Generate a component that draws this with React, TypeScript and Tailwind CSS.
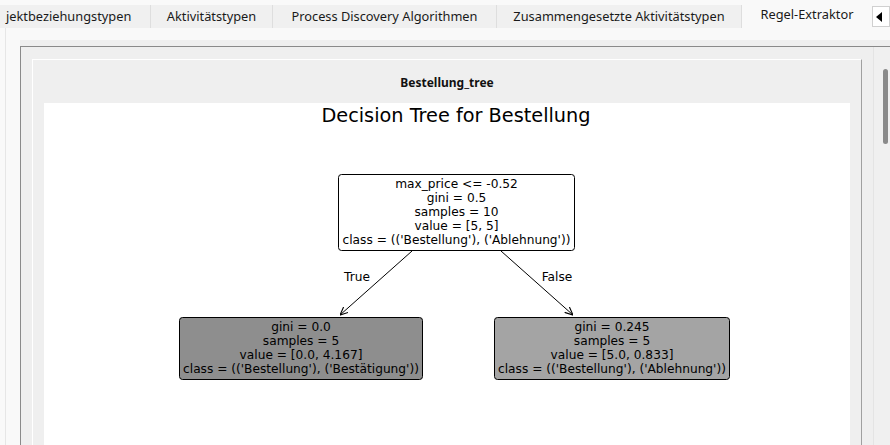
const tabs = [
  { label: 'jektbeziehungstypen', w: 'w-[151px] pl-[6px] text-left' },
  { label: 'Aktivitätstypen', w: 'w-[122px] text-center' },
  { label: 'Process Discovery Algorithmen', w: 'w-[224px] text-center' },
  { label: 'Zusammengesetzte Aktivitätstypen', w: 'w-[245px] text-center' },
];

type TreeNode = {
  x: number;
  y: number;
  w: number;
  h: number;
  fill: string;
  lines: string[];
};

const nodes: TreeNode[] = [
  {
    x: 294.5,
    y: 71.5,
    w: 236,
    h: 76,
    fill: '#ffffff',
    lines: [
      'max_price <= -0.52',
      'gini = 0.5',
      'samples = 10',
      'value = [5, 5]',
      "class = (('Bestellung'), ('Ablehnung'))",
    ],
  },
  {
    x: 135.5,
    y: 214.5,
    w: 243,
    h: 62,
    fill: '#8e8e8e',
    lines: [
      'gini = 0.0',
      'samples = 5',
      'value = [0.0, 4.167]',
      "class = (('Bestellung'), ('Bestätigung'))",
    ],
  },
  {
    x: 450.5,
    y: 214.5,
    w: 235,
    h: 62,
    fill: '#a4a4a4',
    lines: [
      'gini = 0.245',
      'samples = 5',
      'value = [5.0, 0.833]',
      "class = (('Bestellung'), ('Ablehnung'))",
    ],
  },
];

function DecisionTree() {
  const font = "'DejaVu Sans', sans-serif";
  return (
    <svg width="804" height="360" viewBox="0 0 804 360" className="block">
      <defs>
        <marker id="arr" viewBox="0 0 10 10" refX="10" refY="5" markerWidth="8" markerHeight="8" orient="auto">
          <path d="M0 0.5 L10 5 L0 9.5" fill="none" stroke="#000" strokeWidth="1.4" />
        </marker>
      </defs>
      <text x="412" y="19" textAnchor="middle" fontFamily={font} fontSize="19.3" fill="#000">
        Decision Tree for Bestellung
      </text>
      <line x1="368" y1="148" x2="296" y2="212" stroke="#000" strokeWidth="1" markerEnd="url(#arr)" />
      <line x1="457" y1="148" x2="529" y2="212" stroke="#000" strokeWidth="1" markerEnd="url(#arr)" />
      <text x="313" y="178" textAnchor="middle" fontFamily={font} fontSize="12.2" fill="#000">
        True
      </text>
      <text x="513" y="178" textAnchor="middle" fontFamily={font} fontSize="12.2" fill="#000">
        False
      </text>
      {nodes.map((n, i) => (
        <g key={i}>
          <rect x={n.x} y={n.y} width={n.w} height={n.h} rx="3" fill={n.fill} stroke="#000" strokeWidth="1" />
          {n.lines.map((l, j) => (
            <text
              key={j}
              x={n.x + n.w / 2}
              y={n.y + 13.5 + j * 14}
              textAnchor="middle"
              fontFamily={font}
              fontSize="12.2"
              fill="#000"
            >
              {l}
            </text>
          ))}
        </g>
      ))}
    </svg>
  );
}

export default function App() {
  return (
    <div
      className="flex h-[445px] w-[890px] flex-col overflow-hidden bg-[#f9f9f9]"
      style={{ fontFamily: "'Noto Sans', 'Open Sans', sans-serif" }}
    >
      {/* tab strip */}
      <div className="flex h-[28px] shrink-0 items-end text-[12.8px] text-[#1a1a1a]">
        {tabs.map((t) => (
          <div
            key={t.label}
            className={`h-[23px] shrink-0 whitespace-nowrap border-r border-[#dedede] bg-[#f0f0f0] leading-[23px] ${t.w}`}
          >
            {t.label}
          </div>
        ))}
        <div className="h-[26px] w-[130px] shrink-0 whitespace-nowrap bg-[#f9f9f9] text-center leading-[24px]">
          Regel-Extraktor
        </div>
        <div className="mb-[1px] flex h-[21px] w-[18px] shrink-0 items-center border border-[#d0d0d0] bg-white pl-[3px]">
          <svg width="6" height="10" viewBox="0 0 6 10">
            <path d="M6 0 L0 5 L6 10 Z" fill="#000" />
          </svg>
        </div>
      </div>

      {/* tab pane */}
      <div className="ml-[5px] flex min-h-0 flex-1 border-l border-[#e6e6e6] pl-[14px] pt-[12px]">
        <div className="flex min-h-0 flex-1 flex-col bg-[#efefef] pt-[6px]">
          <div className="flex min-h-0 flex-1 border-l border-t border-[#8a8a8a]">
            {/* scroll content */}
            <div className="flex min-h-0 flex-1 pl-[11px] pr-[11px] pt-[12px]">
              <div className="flex min-h-0 flex-1 flex-col border-l border-r border-t border-l-white border-r-[#a0a0a0] border-t-white">
                <div className="flex h-[43px] shrink-0 items-center justify-center pt-[3px] text-[12px] font-bold text-[#111]">
                  Bestellung_tree
                </div>
                <div className="mx-[11px] min-h-0 flex-1 bg-white">
                  <DecisionTree />
                </div>
              </div>
            </div>
            {/* scrollbar */}
            <div className="w-[17px] shrink-0 border-l border-[#e4e4e4] bg-[#f0f0f0] pl-[9px] pt-[22px]">
              <div className="h-[75px] w-[5px] rounded-full bg-[#8a8a8a]" />
            </div>
          </div>
        </div>
      </div>
    </div>
  );
}
